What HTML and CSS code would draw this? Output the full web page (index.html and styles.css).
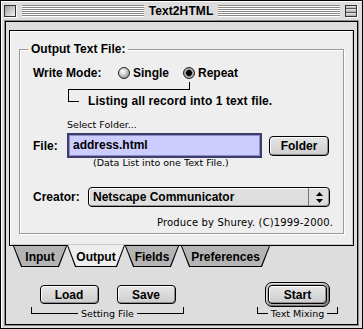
FILE: index.html
```html
<!DOCTYPE html>
<html lang="en">
<head>
    <meta charset="UTF-8">
    <title>Text2HTML</title>
    <link rel="stylesheet" href="styles.css">
</head>
<body>
<div class="window">
    <!--title bar-->
    <div class="titlebar">
        <span class="close-box"></span>
        <span class="stripes"></span>
        <span class="title">Text2HTML</span>
        <span class="stripes"></span>
        <span class="shade-box"><span></span><span></span><span></span></span>
    </div>
    <div class="content">
        <div class="panel">
            <fieldset class="group">
                <legend>Output Text File:</legend>
                <div class="row mode-row">
                    <span class="label mode-label">Write Mode:</span>
                    <span class="option single"><span class="radio"></span>Single</span>
                    <span class="option"><span class="radio on"></span>Repeat</span>
                </div>
                <div class="link-up"></div>
                <div class="listing">
                    <span class="corner"></span>
                    <span class="listing-text">Listing all record into 1 text file.</span>
                </div>
                <div class="small hint">Select Folder...</div>
                <div class="row file-row">
                    <span class="label file-label">File:</span>
                    <div class="field">address.html</div>
                    <button class="btn folder">Folder</button>
                </div>
                <div class="small note">(Data List into one Text File.)</div>
                <div class="row creator-row">
                    <span class="label creator-label">Creator:</span>
                    <div class="popup">
                        <span class="popup-text">Netscape Communicator</span>
                        <span class="popup-arrows">
                            <svg width="7" height="11" viewBox="0 0 7 11">
                                <polygon points="3.5,0 7,4 0,4" fill="#000"/>
                                <polygon points="0,7 7,7 3.5,11" fill="#000"/>
                            </svg>
                        </span>
                    </div>
                </div>
                <div class="small credit">Produce by Shurey. (C)1999-2000.</div>
            </fieldset>
        </div>
        <!--tabs-->
        <div class="tabs">
            <div class="tab tab-input"><span class="tab-face">Input</span></div>
            <div class="tab tab-output selected"><span class="tab-face">Output</span></div>
            <div class="tab tab-fields"><span class="tab-face">Fields</span></div>
            <div class="tab tab-prefs"><span class="tab-face">Preferences</span></div>
        </div>
        <div class="actions">
            <div class="cluster setting">
                <div class="cluster-buttons">
                    <button class="btn">Load</button>
                    <button class="btn">Save</button>
                </div>
                <div class="caption"><span>Setting File</span></div>
            </div>
            <div class="cluster mixing">
                <div class="cluster-buttons">
                    <span class="ring"><button class="btn start">Start</button></span>
                </div>
                <div class="caption"><span>Text Mixing</span></div>
            </div>
        </div>
    </div>
</div>
</body>
</html>
```

FILE: styles.css
```css
body {
    margin: 0;
    padding: 0;
    background: #fff;
    font-family: "Liberation Sans", Arial, sans-serif;
    font-size: 12px;
    font-weight: bold;
    color: #000;
}

.window {
    width: 363px;
    height: 329px;
    box-sizing: border-box;
    border: 1px solid #000;
    background: #dddddd;
    box-shadow: inset 1px 1px 0 #fff;
    padding: 0 4px 4px 4px;
}

/* title bar */
.titlebar {
    height: 20px;
    margin: 0 -4px;
    padding: 0 5px 1px 3px;
    box-sizing: border-box;
    display: flex;
    align-items: center;
}

.close-box {
    width: 10px;
    height: 10px;
    border: 1px solid #333;
    background: linear-gradient(135deg, #9a9a9a, #f4f4f4);
    box-shadow: 1px 1px 0 #fff;
}

.stripes {
    flex: 1;
    height: 12px;
    margin: 0 4px 0 6px;
    background: repeating-linear-gradient(#8a8a8a 0 1px, #fff 1px 2px);
}

.stripes + .title + .stripes {
    margin: 0 5px 0 4px;
}

.title {
    padding: 0 1px;
    font-size: 12px;
    letter-spacing: 0.1px;
}

.shade-box {
    width: 10px;
    height: 10px;
    border: 1px solid #333;
    background: #cfcfcf;
    display: flex;
    flex-direction: column;
    box-shadow: 1px 1px 0 #fff;
}

.shade-box span {
    flex: 1;
    border-bottom: 1px solid #555;
    background: linear-gradient(#eee, #aaa);
}

.shade-box span:last-child {
    border-bottom: none;
}

/* content */
.content {
    height: 304px;
    box-sizing: border-box;
    border: 1px solid #000;
    box-shadow: 0 0 0 1px #8c8c8c;
    background: #dddddd;
}

.panel {
    margin: 8px 3px 0 3px;
    height: 216px;
    box-sizing: border-box;
    border: 1px solid #000;
    background: #eeeeee;
    box-shadow: inset 1px 1px 0 #fff, inset -1px -1px 0 #c8c8c8;
    padding: 11px 9px 0 9px;
}

.group {
    margin: 0;
    padding: 0 11px 4px 13px;
    border: 1px solid #9a9a9a;
    box-shadow: inset 1px 1px 0 #fff, 1px 1px 0 #fff;
    min-width: 0;
}

.group legend {
    padding: 0 3px;
    margin-left: -5px;
    line-height: 15px;
}

.row {
    display: flex;
    align-items: center;
}

.mode-row {
    margin-top: 7px;
    height: 18px;
}

.mode-label {
    width: 85px;
}

.option {
    display: flex;
    align-items: center;
}

.option.single {
    width: 65px;
}

.radio {
    width: 10px;
    height: 10px;
    margin-right: 3px;
    border: 1px solid #222;
    border-radius: 50%;
    background: radial-gradient(circle at 38% 35%, #fff 0, #e6e6e6 25%, #a8a8a8 65%, #777 100%);
}

.radio.on {
    background: radial-gradient(circle at 50% 50%, #000 0 2.6px, #777 3.2px, #c4c4c4 4.2px, #888 5px);
}

.link-up {
    margin-left: 35px;
    width: 121px;
    height: 7px;
    border-right: 1px solid #000;
    border-bottom: 1px solid #000;
}

.listing {
    display: flex;
    align-items: flex-start;
    margin-left: 35px;
}

.corner {
    width: 10px;
    height: 11px;
    border-left: 1px solid #000;
    border-bottom: 1px solid #000;
}

.listing-text {
    margin: 4px 0 0 9px;
    line-height: 14px;
    letter-spacing: 0.1px;
}

.small {
    font-family: "DejaVu Sans", sans-serif;
    font-weight: normal;
    font-size: 9.5px;
    line-height: 12px;
}

.hint {
    margin: 11px 0 0 34px;
}

.file-row {
    margin-top: 2px;
    height: 25px;
}

.file-label {
    width: 34px;
}

.field {
    width: 195px;
    height: 25px;
    box-sizing: border-box;
    border: 2px solid #3e3e6e;
    box-shadow: inset 0 0 0 1px #8e8ec4;
    background: #ccccff;
    padding: 0 4px;
    line-height: 21px;
}

.btn {
    font-family: "Liberation Sans", Arial, sans-serif;
    font-size: 12px;
    font-weight: bold;
    color: #000;
    height: 19px;
    padding: 0;
    border: 1px solid #000;
    border-radius: 4px;
    background: linear-gradient(#e6e6e6, #cdcdcd);
    box-shadow: inset 1px 1px 0 #fff, inset -1px -1px 0 #8e8e8e;
    cursor: pointer;
}

.btn.folder {
    width: 60px;
    height: 20px;
    margin-left: 7px;
}

.note {
    margin: -1px 0 0 60px;
}

.creator-row {
    margin-top: 18px;
}

.creator-label {
    width: 55px;
}

.popup {
    width: 242px;
    height: 20px;
    box-sizing: border-box;
    border: 1px solid #000;
    border-radius: 4px;
    background: #dedede;
    box-shadow: inset 1px 1px 0 #fff, inset -1px -1px 0 #999;
    display: flex;
    align-items: center;
}

.popup-text {
    flex: 1;
    padding-left: 4px;
}

.popup-arrows {
    width: 20px;
    height: 18px;
    border-left: 1px solid #777;
    display: flex;
    align-items: center;
    justify-content: center;
}

.credit {
    margin-top: 10px;
    text-align: right;
    margin-right: -1px;
    font-size: 10px;
    letter-spacing: 0.15px;
}

/* tabs */
.tabs {
    display: flex;
    padding-left: 7px;
    height: 21px;
}

.tab {
    height: 21px;
    background: #000;
    clip-path: polygon(0 0, 100% 0, calc(100% - 8px) 100%, 8px 100%);
    display: flex;
}

.tab-face {
    flex: 1;
    margin: 0 1px 1px 1px;
    background: #b4b4b4;
    clip-path: polygon(0 0, 100% 0, calc(100% - 8px) 100%, 8px 100%);
    display: flex;
    align-items: center;
    justify-content: center;
    padding-top: 1px;
}

.tab-input {
    width: 54px;
}

.tab-output {
    width: 58px;
}

.tab-fields {
    width: 54px;
}

.tab-prefs {
    width: 89px;
    margin-left: 2px;
}

.tab.selected {
    height: 22px;
    margin-top: -1px;
}

.tab.selected .tab-face {
    background: #eeeeee;
    padding-top: 2px;
}

/* bottom buttons */
.actions {
    display: flex;
    justify-content: space-between;
    margin-top: 15px;
    padding: 0 19px 0 25px;
}

.setting {
    width: 153px;
}

.mixing {
    width: 81px;
}

.cluster-buttons {
    height: 25px;
    display: flex;
    align-items: center;
    justify-content: center;
    gap: 18px;
}

.cluster-buttons .btn {
    width: 59px;
}

.ring {
    display: flex;
    border: 1px solid #000;
    border-radius: 7px;
    padding: 2px;
    background: #b0b0b0;
    box-shadow: inset 1px 1px 0 #e0e0e0, inset -1px -1px 0 #777;
}

.caption {
    display: flex;
    align-items: flex-start;
    font-family: "DejaVu Sans", sans-serif;
    font-weight: normal;
    font-size: 9.5px;
}

.caption::before,
.caption::after {
    content: "";
    flex: 1;
    height: 6px;
    border-bottom: 1px solid #000;
}

.caption::before {
    border-left: 1px solid #000;
}

.caption::after {
    border-right: 1px solid #000;
}

.caption span {
    padding: 0 3px;
    margin-top: 1px;
    line-height: 12px;
}
```
